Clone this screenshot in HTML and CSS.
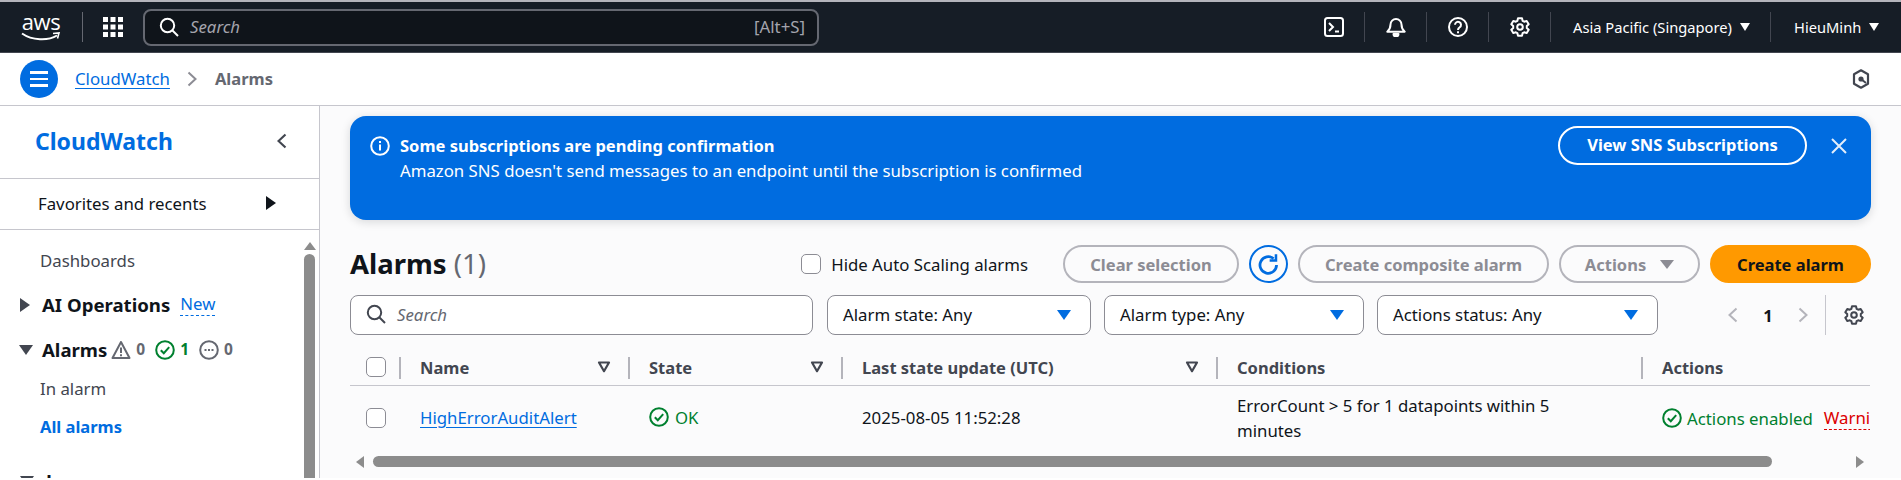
FILE: index.html
```html
<!DOCTYPE html>
<html lang="en">
<head>
    <meta charset="UTF-8">
    <meta name="viewport" content="width=device-width, initial-scale=1.0">
    <title>Alarms | CloudWatch</title>
    <link rel="stylesheet" href="styles.css">
</head>
<body>
    <svg class="sprite" width="0" height="0">
        <symbol id="i-search" viewBox="0 0 20 20"><circle cx="8.500" cy="8.500" r="6.700" fill="none" stroke="currentColor" stroke-width="2"/><path d="M13.500 13.500L19 19" stroke="currentColor" stroke-width="2" fill="none"/></symbol>
        <symbol id="i-gear" viewBox="0 0 20 20"><path d="M8 1.200h4l.6 2.600 1.600.9 2.500-.8 2 3.400-1.900 1.800v1.800l1.900 1.800-2 3.400-2.500-.8-1.600.9-.6 2.600H8l-.6-2.600-1.600-.9-2.500.8-2-3.400 1.900-1.800V9.100L1.300 7.300l2-3.400 2.500.8 1.600-.9z" fill="none" stroke="currentColor" stroke-width="2" stroke-linejoin="round"/><circle cx="10" cy="10" r="2.800" fill="none" stroke="currentColor" stroke-width="2"/></symbol>
        <symbol id="i-check" viewBox="0 0 20 20"><circle cx="10" cy="10" r="8.800" fill="none" stroke="currentColor" stroke-width="2"/><path d="M5.800 10.200l3 3 5.400-6" fill="none" stroke="currentColor" stroke-width="2"/></symbol>
        <symbol id="i-sort" viewBox="0 0 14 12"><path d="M2 1.500h10L7 10.200z" fill="none" stroke="currentColor" stroke-width="2.200" stroke-linejoin="round"/></symbol>
    </svg>

    <header class="top-nav">
        <div class="aws-logo">
            <span class="aws-word">aws</span>
            <svg class="aws-smile" viewBox="0 0 40 10"><path d="M1 1.500C11 8.500 27 9 36 3.500" fill="none" stroke="#fff" stroke-width="2"/><path d="M32 1.500l6-.5-1.500 5.500" fill="none" stroke="#fff" stroke-width="1.600"/></svg>
        </div>
        <span class="nav-rule"></span>
        <svg class="apps-icon" viewBox="0 0 20 20" fill="#fff">
            <rect x="0" y="0" width="5" height="5"/><rect x="7.500" y="0" width="5" height="5"/><rect x="15" y="0" width="5" height="5"/>
            <rect x="0" y="7.500" width="5" height="5"/><rect x="7.500" y="7.500" width="5" height="5"/><rect x="15" y="7.500" width="5" height="5"/>
            <rect x="0" y="15" width="5" height="5"/><rect x="7.500" y="15" width="5" height="5"/><rect x="15" y="15" width="5" height="5"/>
        </svg>
        <div class="nav-search">
            <svg class="icon-20"><use href="#i-search"/></svg>
            <span class="nav-search-text">Search</span>
            <span class="nav-search-key">[Alt+S]</span>
        </div>
        <div class="nav-right">
            <div class="nav-cell">
                <svg class="icon-20" viewBox="0 0 20 20" fill="none" stroke="#fff" stroke-width="2"><rect x="1" y="1" width="18" height="18" rx="2.500"/><path d="M5 6l4 4-4 4M11 14.500h4"/></svg>
            </div>
            <div class="nav-cell">
                <svg class="icon-20" viewBox="0 0 20 20" fill="none" stroke="#fff" stroke-width="2" stroke-linejoin="round"><path d="M4.500 7.500a5.500 5.500 0 0 1 11 0c0 3.500.8 5.200 3.200 7.200H1.300c2.400-2 3.200-3.700 3.200-7.200z"/><path d="M7.500 17a2.500 2.500 0 0 0 5 0z" fill="#fff"/></svg>
            </div>
            <div class="nav-cell">
                <svg class="icon-20" viewBox="0 0 20 20" fill="none" stroke="#fff" stroke-width="2"><circle cx="10" cy="10" r="9"/><path d="M7 7.800a3 3 0 1 1 4.700 2.500c-1.200.8-1.700 1.300-1.700 2.700"/><path d="M10 14.300v2"/></svg>
            </div>
            <div class="nav-cell">
                <svg class="icon-20"><use href="#i-gear"/></svg>
            </div>
            <div class="nav-cell nav-region">Asia Pacific (Singapore)<span class="caret"></span></div>
            <div class="nav-cell nav-user">HieuMinh<span class="caret"></span></div>
        </div>
    </header>

    <div class="sub-bar">
        <span class="menu-btn"><span></span><span></span><span></span></span>
        <a class="crumb-link">CloudWatch</a>
        <svg class="crumb-sep" viewBox="0 0 10 16"><path d="M1.500 1.500L8.500 8l-7 6.500" fill="none" stroke="#8c8c94" stroke-width="2"/></svg>
        <span class="crumb-current">Alarms</span>
        <svg class="hex-icon" viewBox="0 0 18 20" fill="none" stroke="#424650" stroke-width="2.200"><path d="M9 1.300l7 4v9.400l-7 4-7-4V5.300z" stroke-linejoin="round"/><circle cx="9" cy="10" r="2.600" fill="#424650" stroke="none"/><path d="M9 10l5 4" stroke-width="2"/></svg>
    </div>

    <div class="layout">
        <aside class="sidebar">
            <div class="side-head">
                <span class="side-title">CloudWatch</span>
                <svg class="side-close" viewBox="0 0 10 16"><path d="M8.500 1.500L1.500 8l7 6.500" fill="none" stroke="#424650" stroke-width="2.200"/></svg>
            </div>
            <div class="side-fav">
                <span>Favorites and recents</span>
                <span class="tri-right dark"></span>
            </div>
            <div class="side-body">
                <nav class="side-links">
                    <div class="side-item">Dashboards</div>
                    <div class="side-group group-ai">
                        <span class="tri-right"></span>
                        <strong>AI Operations</strong>
                        <a class="new-tag">New</a>
                    </div>
                    <div class="side-group group-alarms">
                        <span class="tri-down"></span>
                        <strong>Alarms</strong>
                        <svg class="icon-20 gray" viewBox="0 0 20 20" fill="none" stroke="currentColor" stroke-width="2"><path d="M10 2L1.500 18h17z" stroke-linejoin="round"/><path d="M10 7.500v5.500M10 14.300v2"/></svg>
                        <span class="count gray">0</span>
                        <svg class="icon-20 green"><use href="#i-check"/></svg>
                        <span class="count green">1</span>
                        <svg class="icon-20 gray" viewBox="0 0 20 20" fill="none" stroke="currentColor" stroke-width="2"><circle cx="10" cy="10" r="8.800"/><path d="M5.500 10h2M9 10h2M12.500 10h2"/></svg>
                        <span class="count gray">0</span>
                    </div>
                    <div class="side-item item-sub">In alarm</div>
                    <div class="side-item item-active">All alarms</div>
                    <div class="side-group group-logs">
                        <span class="tri-down"></span>
                        <strong>Logs</strong>
                    </div>
                </nav>
                <div class="side-scroll">
                    <span class="scroll-up"></span>
                    <span class="side-thumb"></span>
                </div>
            </div>
        </aside>

        <main class="main">
            <section class="banner">
                <svg class="banner-icon" viewBox="0 0 20 20" fill="none" stroke="#fff" stroke-width="2"><circle cx="10" cy="10" r="8.800"/><path d="M10 8.500v6M10 5v2"/></svg>
                <div class="banner-text">
                    <strong>Some subscriptions are pending confirmation</strong>
                    <span>Amazon SNS doesn't send messages to an endpoint until the subscription is confirmed</span>
                </div>
                <span class="banner-btn">View SNS Subscriptions</span>
                <svg class="banner-close" viewBox="0 0 18 18"><path d="M2 2l14 14M16 2L2 16" stroke="#e3eefb" stroke-width="2" fill="none"/></svg>
            </section>

            <div class="toolbar">
                <h1 class="page-title">Alarms <span>(1)</span></h1>
                <label class="hide-check"><span class="checkbox"></span>Hide Auto Scaling alarms</label>
                <span class="btn btn-clear">Clear selection</span>
                <span class="refresh-btn">
                    <svg viewBox="0 0 20 20" fill="none" stroke="#006ce0" stroke-width="2.400"><path d="M17 10.500a7.200 7.200 0 1 1-2.600-5.600"/><path d="M16.500 1v5.500H11" stroke-width="2.200"/></svg>
                </span>
                <span class="btn btn-composite">Create composite alarm</span>
                <span class="btn btn-actions">Actions<span class="caret caret-gray"></span></span>
                <span class="btn btn-primary">Create alarm</span>
            </div>

            <div class="filters">
                <div class="field field-search">
                    <svg class="icon-20"><use href="#i-search"/></svg>
                    <span>Search</span>
                </div>
                <div class="field field-state">Alarm state: Any<span class="caret caret-blue"></span></div>
                <div class="field field-type">Alarm type: Any<span class="caret caret-blue"></span></div>
                <div class="field field-status">Actions status: Any<span class="caret caret-blue"></span></div>
                <div class="pager">
                    <svg class="pager-arrow" viewBox="0 0 10 16"><path d="M8.500 1.500L1.500 8l7 6.500" fill="none" stroke="#b4b4bb" stroke-width="2"/></svg>
                    <strong>1</strong>
                    <svg class="pager-arrow" viewBox="0 0 10 16"><path d="M1.500 1.500L8.500 8l-7 6.500" fill="none" stroke="#b4b4bb" stroke-width="2"/></svg>
                    <span class="pager-rule"></span>
                    <svg class="icon-20 gray-dark"><use href="#i-gear"/></svg>
                </div>
            </div>

            <div class="alarm-table">
                <div class="th th-check"><span class="checkbox"></span></div>
                <div class="th">Name<svg class="sort"><use href="#i-sort"/></svg></div>
                <div class="th">State<svg class="sort"><use href="#i-sort"/></svg></div>
                <div class="th">Last state update (UTC)<svg class="sort"><use href="#i-sort"/></svg></div>
                <div class="th">Conditions</div>
                <div class="th">Actions</div>

                <div class="td td-check"><span class="checkbox"></span></div>
                <div class="td"><a class="crumb-link">HighErrorAuditAlert</a></div>
                <div class="td state-ok"><svg class="icon-20"><use href="#i-check"/></svg>OK</div>
                <div class="td">2025-08-05 11:52:28</div>
                <div class="td td-cond">ErrorCount &gt; 5 for 1 datapoints within 5 minutes</div>
                <div class="td td-actions">
                    <svg class="icon-20 green"><use href="#i-check"/></svg>
                    <span class="green">Actions enabled</span>
                    <span class="warn">Warning</span>
                </div>
            </div>

            <div class="h-scroll">
                <span class="arrow-left"></span>
                <span class="h-thumb"></span>
                <span class="arrow-right"></span>
            </div>
        </main>
    </div>
</body>
</html>
```

FILE: styles.css
```css
* {
    box-sizing: border-box;
}
html, body {
    height: 480px;
    overflow: hidden;
}
body {
    margin: 0;
    font-family: "Noto Sans", "Open Sans", sans-serif;
    font-size: 16.8px;
    line-height: 25px;
    color: #0f141a;
    background: #fff;
}
strong, .btn, .banner-btn, .crumb-current, .item-active {
    font-size: 16.5px;
}
.sprite {
    position: absolute;
}
.icon-20 {
    width: 20px;
    height: 20px;
    flex: none;
}
.gray { color: #656871; }
.gray-dark { color: #424650; }
.green { color: #00802f; }

/* top nav */
.top-nav {
    height: 53px;
    display: flex;
    align-items: center;
    background: #161d26;
    border-top: 2px solid #b4b4bb;
    border-bottom: 1px solid #424650;
    color: #fff;
    padding-left: 21px;
}
.aws-logo {
    width: 40px;
    height: 34px;
    display: flex;
    flex-direction: column;
    align-items: center;
}
.aws-word {
    font-family: "Open Sans", sans-serif;
    font-size: 22px;
    line-height: 22px;
    letter-spacing: -0.5px;
}
.aws-smile {
    width: 40px;
    height: 10px;
}
.nav-rule {
    width: 1px;
    height: 30px;
    margin-left: 21px;
    background: #656871;
}
.apps-icon {
    width: 20px;
    height: 20px;
    margin-left: 20px;
}
.nav-search {
    width: 676px;
    height: 37px;
    margin-left: 20px;
    padding: 0 12px 2px 14px;
    display: flex;
    align-items: center;
    background: #0f141a;
    border: 2px solid #656871;
    border-radius: 8px;
}
.nav-search .icon-20 {
    margin-top: 2px;
}
.nav-search-text {
    margin-left: 11px;
    font-style: italic;
    color: #a4a4ad;
}
.nav-search-key {
    margin-left: auto;
    color: #a4a4ad;
}
.nav-right {
    margin-left: auto;
    display: flex;
    align-items: center;
}
.nav-cell {
    width: 62px;
    height: 30px;
    display: flex;
    align-items: center;
    justify-content: center;
    border-right: 1px solid #424650;
}
.nav-region {
    width: 220px;
    justify-content: flex-start;
    padding-left: 22px;
    font-size: 14.7px;
}
.nav-user {
    width: 130px;
    justify-content: flex-start;
    padding-left: 23px;
    font-size: 14.7px;
    border-right: none;
}
.caret {
    width: 0;
    height: 0;
    margin-left: 8px;
    border-left: 5px solid transparent;
    border-right: 5px solid transparent;
    border-top: 8px solid #fff;
}

/* breadcrumb bar */
.sub-bar {
    height: 53px;
    display: flex;
    align-items: center;
    padding-left: 20px;
    border-bottom: 1px solid #c6c6cd;
    background: #fff;
}
.menu-btn {
    width: 38px;
    height: 38px;
    border-radius: 50%;
    background: #006ce0;
    display: flex;
    flex-direction: column;
    align-items: center;
    justify-content: center;
    gap: 4px;
}
.menu-btn span {
    width: 18px;
    height: 2.5px;
    background: #fff;
}
.crumb-link {
    color: #006ce0;
    text-decoration: underline;
    text-underline-offset: 3px;
}
.sub-bar .crumb-link {
    margin: 0 0 2px 17px;
}
.crumb-sep {
    width: 10px;
    height: 16px;
    margin-left: 17px;
}
.crumb-current {
    margin: 0 0 2px 18px;
    font-weight: 700;
    color: #656871;
}
.hex-icon {
    width: 18px;
    height: 20px;
    margin-left: auto;
    margin-right: 31px;
}

/* sidebar */
.layout {
    display: flex;
    height: 372px;
    overflow: hidden;
}
.sidebar {
    width: 320px;
    flex: none;
    background: #fff;
    border-right: 1px solid #c6c6cd;
}
.side-head {
    height: 73px;
    display: flex;
    align-items: center;
    justify-content: space-between;
    padding: 0 32px 2px 35px;
    border-bottom: 1px solid #c6c6cd;
}
.side-title {
    font-size: 23px;
    font-weight: 700;
    color: #006ce0;
}
.side-close {
    width: 10px;
    height: 16px;
}
.side-fav {
    height: 51px;
    display: flex;
    align-items: center;
    justify-content: space-between;
    padding: 0 43px 2px 38px;
    border-bottom: 1px solid #c6c6cd;
}
.tri-right {
    width: 0;
    height: 0;
    border-top: 7px solid transparent;
    border-bottom: 7px solid transparent;
    border-left: 10px solid #424650;
}
.tri-right.dark {
    border-left-color: #0f141a;
}
.tri-down {
    width: 0;
    height: 0;
    border-left: 7px solid transparent;
    border-right: 7px solid transparent;
    border-top: 10px solid #424650;
}
.side-body {
    display: flex;
    justify-content: space-between;
}
.side-links {
    padding-top: 18px;
    padding-left: 20px;
}
.side-item {
    padding-left: 20px;
    color: #424650;
}
.side-group {
    display: flex;
    align-items: center;
    color: #0f141a;
}
.side-group strong {
    margin-left: 12px;
    font-size: 18.6px;
}
.group-ai {
    margin-top: 19px;
}
.group-alarms {
    margin-top: 20px;
    margin-left: -1px;
}
.group-alarms strong {
    margin-left: 9px;
}
.group-alarms .icon-20 {
    margin-left: 4px;
}
.group-alarms .icon-20 ~ .icon-20 {
    margin-left: 10px;
}
.count {
    margin-left: 5px;
    font-size: 15.5px;
    font-weight: 700;
}
.new-tag {
    margin-left: 10px;
    color: #006ce0;
    border-bottom: 1px dashed #006ce0;
    line-height: 22px;
}
.item-sub {
    margin-top: 14px;
}
.item-active {
    margin-top: 13px;
    font-weight: 700;
    color: #006ce0;
}
.group-logs {
    margin-top: 29px;
}
.side-scroll {
    width: 11px;
    margin-right: 4px;
    padding-top: 12px;
    display: flex;
    flex-direction: column;
    align-items: center;
}
.scroll-up {
    width: 0;
    height: 0;
    border-left: 6px solid transparent;
    border-right: 6px solid transparent;
    border-bottom: 8px solid #8c8c8c;
}
.side-thumb {
    width: 11px;
    height: 240px;
    margin-top: 4px;
    border-radius: 6px;
    background: #8c8c8c;
}

/* main area */
.main {
    flex: 1;
    min-width: 0;
    padding: 10px 30px 0 30px;
    background: #fbfbfc;
}
.banner {
    height: 104px;
    display: flex;
    align-items: flex-start;
    padding: 10px 20px 0 20px;
    background: #006ce0;
    border-radius: 16px;
    box-shadow: 0 2px 10px rgba(15, 20, 26, 0.15);
    color: #fff;
}
.banner-icon {
    width: 20px;
    height: 20px;
    margin-top: 10px;
    flex: none;
}
.banner-text {
    margin-left: 10px;
    margin-top: 7px;
    display: flex;
    flex-direction: column;
}
.banner-btn {
    margin-left: auto;
    height: 39px;
    width: 249px;
    display: flex;
    align-items: center;
    justify-content: center;
    padding-bottom: 2px;
    font-weight: 700;
    border: 2px solid #fff;
    border-radius: 20px;
}
.banner-close {
    width: 18px;
    height: 18px;
    margin: 11px 3px 0 23px;
}

.toolbar {
    margin-top: 25px;
    height: 38px;
    display: flex;
    align-items: center;
}
.page-title {
    margin: 0;
    font-size: 27.5px;
    line-height: 38px;
    font-weight: 700;
}
.page-title span {
    font-weight: 400;
    color: #656871;
}
.hide-check {
    margin-left: auto;
    display: flex;
    align-items: center;
    gap: 10px;
}
.checkbox {
    width: 20px;
    height: 20px;
    flex: none;
    background: #fff;
    border: 1px solid #8c8c94;
    border-radius: 5px;
}
.btn {
    height: 38px;
    display: flex;
    align-items: center;
    justify-content: center;
    font-weight: 700;
    border-radius: 20px;
    border: 2px solid #b4b4bb;
    color: #8c8c94;
}
.btn-clear {
    width: 176px;
    margin-left: 35px;
}
.refresh-btn {
    width: 39px;
    height: 38px;
    margin-left: 10px;
    display: flex;
    align-items: center;
    justify-content: center;
    border: 2px solid #006ce0;
    border-radius: 50%;
}
.refresh-btn svg {
    width: 23px;
    height: 23px;
}
.btn-composite {
    width: 251px;
    margin-left: 10px;
}
.btn-actions {
    width: 141px;
    margin-left: 10px;
}
.caret-gray {
    margin-left: 14px;
    border-top: 9px solid #8c8c94;
    border-left-width: 7px;
    border-right-width: 7px;
}
.btn-primary {
    width: 161px;
    margin-left: 10px;
    background: #ff9900;
    border-color: #ff9900;
    color: #0f141a;
}

.filters {
    margin-top: 12px;
    display: flex;
    align-items: center;
}
.field {
    height: 40px;
    display: flex;
    align-items: center;
    padding: 0 19px 2px 15px;
    background: #fff;
    border: 1px solid #8c8c94;
    border-radius: 8px;
}
.field-search {
    width: 463px;
    color: #424650;
}
.field-search span {
    margin-left: 11px;
    font-style: italic;
    color: #656871;
}
.field-state { width: 264px; margin-left: 14px; }
.field-type { width: 260px; margin-left: 13px; }
.field-status { width: 281px; margin-left: 13px; }
.caret-blue {
    margin-left: auto;
    margin-top: 2px;
    border-left-width: 7px;
    border-right-width: 7px;
    border-top: 10px solid #006ce0;
}
.pager {
    margin-left: auto;
    margin-right: 7px;
    height: 40px;
    display: flex;
    align-items: center;
}
.pager-arrow {
    width: 10px;
    height: 16px;
}
.pager strong {
    width: 60px;
    text-align: center;
}
.pager-rule {
    width: 1px;
    height: 40px;
    margin: 0 18px 0 17px;
    background: #c6c6cd;
}

/* table */
.alarm-table {
    display: grid;
    grid-template-columns: 49px 229px 213px 375px 425px 229px;
    overflow: hidden;
}
.th {
    height: 51px;
    display: flex;
    align-items: center;
    justify-content: space-between;
    padding: 14px 17px 0 21px;
    font-size: 16.5px;
    font-weight: 700;
    color: #424650;
    border-bottom: 1px solid #c6c6cd;
    position: relative;
}
.th::before {
    content: "";
    position: absolute;
    left: 0;
    top: 22px;
    bottom: 6px;
    width: 2px;
    background: #b4b4bb;
}
.th-check {
    padding-left: 16px;
}
.th-check::before {
    display: none;
}
.sort {
    width: 14px;
    height: 12px;
    color: #424650;
}
.td {
    height: 64px;
    display: flex;
    align-items: center;
    padding: 0 10px 2px 21px;
}
.td-check {
    padding: 0 0 0 16px;
}
.td-cond {
    padding: 0 60px 0 21px;
}
.state-ok {
    gap: 6px;
    color: #00802f;
}
.td-actions {
    gap: 5px;
    white-space: nowrap;
    overflow: hidden;
    padding: 0 0 0 21px;
}
.warn {
    margin-left: 6px;
    color: #db0000;
    border-bottom: 1px dashed #db0000;
    line-height: 22px;
}

.h-scroll {
    margin-top: 6px;
    height: 11px;
    display: flex;
    align-items: center;
}
.arrow-left {
    width: 0;
    height: 0;
    margin-left: 6px;
    border-top: 6px solid transparent;
    border-bottom: 6px solid transparent;
    border-right: 8px solid #8c8c8c;
}
.h-thumb {
    width: 1399px;
    height: 11px;
    margin-left: 9px;
    background: #8c8c8c;
    border-radius: 6px;
}
.arrow-right {
    width: 0;
    height: 0;
    margin-left: 84px;
    border-top: 6px solid transparent;
    border-bottom: 6px solid transparent;
    border-left: 8px solid #8c8c8c;
}
```
